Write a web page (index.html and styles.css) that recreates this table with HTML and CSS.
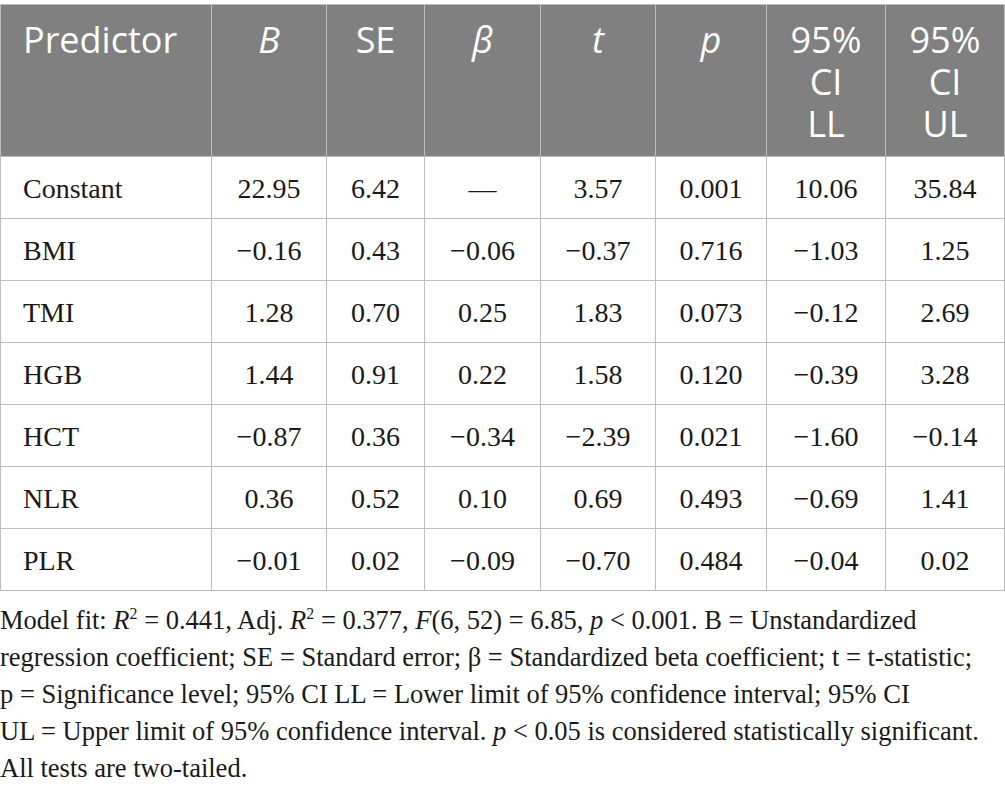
FILE: index.html
```html
<!DOCTYPE html>
<html>
<head>
<meta charset="utf-8">
<link rel="stylesheet" href="styles.css">
</head>
<body>
<div class="wrap">
<table class="reg">
  <colgroup>
    <col class="c1"><col class="c2"><col class="c3"><col class="c4"><col class="c5"><col class="c6"><col class="c7"><col class="c8">
  </colgroup>
  <thead>
    <tr>
      <th class="left">Predictor</th>
      <th><i>B</i></th>
      <th>SE</th>
      <th><i>β</i></th>
      <th><i>t</i></th>
      <th><i>p</i></th>
      <th>95%<br>CI<br>LL</th>
      <th>95%<br>CI<br>UL</th>
    </tr>
  </thead>
  <tbody>
    <tr><td class="left">Constant</td><td>22.95</td><td>6.42</td><td>—</td><td>3.57</td><td>0.001</td><td>10.06</td><td>35.84</td></tr>
    <tr><td class="left">BMI</td><td>−0.16</td><td>0.43</td><td>−0.06</td><td>−0.37</td><td>0.716</td><td>−1.03</td><td>1.25</td></tr>
    <tr><td class="left">TMI</td><td>1.28</td><td>0.70</td><td>0.25</td><td>1.83</td><td>0.073</td><td>−0.12</td><td>2.69</td></tr>
    <tr><td class="left">HGB</td><td>1.44</td><td>0.91</td><td>0.22</td><td>1.58</td><td>0.120</td><td>−0.39</td><td>3.28</td></tr>
    <tr><td class="left">HCT</td><td>−0.87</td><td>0.36</td><td>−0.34</td><td>−2.39</td><td>0.021</td><td>−1.60</td><td>−0.14</td></tr>
    <tr><td class="left">NLR</td><td>0.36</td><td>0.52</td><td>0.10</td><td>0.69</td><td>0.493</td><td>−0.69</td><td>1.41</td></tr>
    <tr><td class="left">PLR</td><td>−0.01</td><td>0.02</td><td>−0.09</td><td>−0.70</td><td>0.484</td><td>−0.04</td><td>0.02</td></tr>
  </tbody>
</table>
<p class="note">Model fit: <i>R</i><sup>2</sup> = 0.441, Adj. <i>R</i><sup>2</sup> = 0.377, <i>F</i>(6, 52) = 6.85, <i>p</i> &lt; 0.001. B = Unstandardized<br>regression coefficient; SE = Standard error; β = Standardized beta coefficient; t = t-statistic;<br>p = Significance level; 95% CI LL = Lower limit of 95% confidence interval; 95% CI<br>UL = Upper limit of 95% confidence interval. <i>p</i> &lt; 0.05 is considered statistically significant.<br>All tests are two-tailed.</p>
</div>
</body>
</html>
```

FILE: styles.css
```css
html, body {
  margin: 0;
  padding: 0;
  background: #ffffff;
}
.wrap {
  width: 1005px;
  padding-top: 4px;
}
.reg {
  border-collapse: collapse;
  table-layout: fixed;
  width: 1005px;
}
.c1 { width: 211px; }
.c2 { width: 115px; }
.c3 { width: 98px; }
.c4 { width: 116px; }
.c5 { width: 115px; }
.c6 { width: 111px; }
.c7 { width: 119px; }
.c8 { width: 119px; }
.reg th, .reg td {
  border: 1px solid #bdbdbd;
  text-align: center;
}
.reg th {
  background: #808080;
  color: #ffffff;
  font-family: "Open Sans", "Noto Sans", sans-serif;
  font-weight: 400;
  font-size: 36px;
  line-height: 42px;
  vertical-align: top;
  height: 152px;
  padding: 14px 4px 0 4px;
  box-sizing: border-box;
}
.reg th i { font-style: italic; }
.reg td {
  font-family: "Liberation Serif", "Times New Roman", serif;
  font-size: 28px;
  color: #1a1a1a;
  height: 62px;
  padding: 2px 4px 0 4px;
  box-sizing: border-box;
  vertical-align: middle;
}
.reg th.left, .reg td.left {
  text-align: left;
  padding-left: 22px;
}
.note {
  margin: 11px 0 0 0;
  font-family: "Liberation Serif", "Times New Roman", serif;
  font-size: 26.5px;
  line-height: 37px;
  color: #1a1a1a;
  white-space: nowrap;
}
.note sup {
  font-size: 60%;
  line-height: 0;
  vertical-align: 0.6em;
}
```
